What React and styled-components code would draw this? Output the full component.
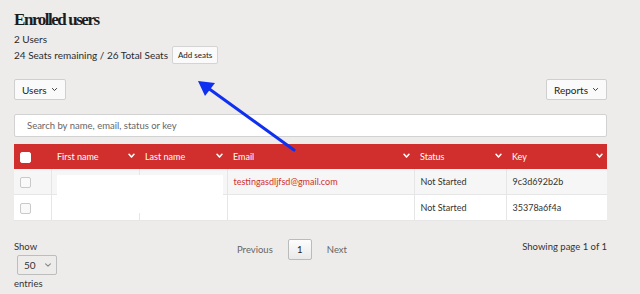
import React from 'react';
import styled, { createGlobalStyle } from 'styled-components';

const GlobalStyle = createGlobalStyle`
  html, body {
    margin: 0;
    padding: 0;
    background: #edeceb;
  }
  body {
    font-family: "Lato", "Noto Sans", sans-serif;
    color: #2b2b2b;
  }
`;

const Page = styled.div`
  position: relative;
  width: 640px;
  height: 294px;
  padding: 9px 33px 0 14px;
  box-sizing: border-box;
  overflow: hidden;
`;

const Title = styled.h1`
  margin: 0;
  font-family: "Liberation Serif", serif;
  font-weight: 700;
  font-size: 17px;
  line-height: 22px;
  letter-spacing: -1.45px;
  color: #1c1c1c;
`;

const Meta = styled.div`
  font-size: 10px;
  line-height: 13px;
  margin-top: ${p => p.$top || 0}px;
  display: flex;
  align-items: center;
  gap: 4px;
`;

const SmallButton = styled.button`
  font-family: inherit;
  font-size: 8px;
  color: #222;
  background: #fafafa;
  border: 1px solid #d4d4d4;
  border-radius: 2px;
  height: 18px;
  padding: 0 5px;
`;

const Toolbar = styled.div`
  display: flex;
  justify-content: space-between;
  margin-top: 15px;
`;

const DropButton = styled.button`
  font-family: inherit;
  font-size: 10px;
  color: #222;
  background: #fafafa;
  border: 1px solid #cfcfcf;
  border-radius: 2px;
  height: 21px;
  padding: 0 7px;
  display: flex;
  align-items: center;
  gap: 4px;
`;

const Search = styled.div`
  margin-top: 14px;
  height: 23px;
  background: #fff;
  border: 1px solid #d2d2d2;
  border-radius: 2px;
  box-sizing: border-box;
  padding-left: 12px;
  display: flex;
  align-items: center;
  font-size: 9.5px;
  color: #666;
`;

const TableWrap = styled.div`
  position: relative;
  margin-top: 7px;
`;

const Table = styled.table`
  width: 593px;
  table-layout: fixed;
  border-collapse: collapse;
  font-size: 9px;
`;

const Th = styled.th`
  background: #d12e2e;
  color: #fff;
  font-weight: 400;
  text-align: left;
  height: 25px;
  padding: 0 6px;
  position: relative;
`;

const Caret = styled.span`
  position: absolute;
  right: 4px;
  top: 9px;
  display: flex;
`;

const Tr = styled.tr`
  background: ${p => (p.$alt ? '#f6f6f6' : '#fff')};
  border-bottom: 1px solid #e6e6e6;
`;

const Td = styled.td`
  height: 25px;
  padding: 0 6px;
  border-left: 1px solid #e6e6e6;
  color: ${p => (p.$red ? '#d12e2e' : '#333')};
  &:first-child { border-left: none; }
`;

const Box = styled.span`
  display: inline-block;
  width: 9px;
  height: 9px;
  border-radius: 2px;
  border: 1px solid ${p => (p.$head ? '#fff' : '#c9c9c9')};
  background: ${p => (p.$head ? '#fff' : '#f9f9f9')};
  vertical-align: middle;
`;

const Redact = styled.div`
  position: absolute;
  left: 43px;
  top: 31px;
  width: 166px;
  height: 38px;
  background: #fff;
`;

const Footer = styled.div`
  display: grid;
  grid-template-columns: 223px auto 1fr;
  margin-top: 18px;
  font-size: 9.5px;
`;

const ShowBox = styled.div`
  padding-top: 2px;
  line-height: 12px;
  color: #333;
`;

const Select = styled.div`
  margin: 2px 0 3px 3px;
  width: 40px;
  height: 20px;
  box-sizing: border-box;
  border: 1px solid #bdbdbd;
  border-radius: 2px;
  display: flex;
  align-items: center;
  justify-content: space-between;
  padding: 0 4px 0 6px;
  font-size: 10px;
`;

const Pager = styled.div`
  display: flex;
  align-items: flex-start;
  gap: 15px;
  color: #666;
  font-size: 9.5px;
`;

const PageLabel = styled.span`
  line-height: 21px;
`;

const PageNum = styled.span`
  width: 24px;
  height: 21px;
  box-sizing: border-box;
  border: 1px solid #bbb;
  background: linear-gradient(#fdfdfd, #e9e9e9);
  border-radius: 2px;
  display: flex;
  align-items: center;
  justify-content: center;
  color: #222;
`;

const Info = styled.div`
  text-align: right;
  color: #333;
  padding-top: 2px;
`;

const Arrow = styled.svg`
  position: absolute;
  left: 0;
  top: 0;
  pointer-events: none;
`;

const Chevron = ({ color = '#333', size = 7 }) => (
  <svg width={size} height={size} viewBox="0 0 10 10">
    <path d="M2 3.5 L5 6.5 L8 3.5" fill="none" stroke={color} strokeWidth="1.4" strokeLinecap="round" strokeLinejoin="round" />
  </svg>
);

const HeadCaret = () => (
  <Caret>
    <svg width="7" height="6" viewBox="0 0 10 8">
      <path d="M1.5 1.5 L5 5.5 L8.5 1.5" fill="none" stroke="#fff" strokeWidth="2.2" strokeLinecap="round" strokeLinejoin="round" />
    </svg>
  </Caret>
);

const rows = [
  { email: 'testingasdljfsd@gmail.com', status: 'Not Started', key: '9c3d692b2b' },
  { email: '', status: 'Not Started', key: '35378a6f4a' },
];

export default function App() {
  return (
    <Page>
      <GlobalStyle />
      <Title>Enrolled users</Title>
      <Meta $top={2}>2 Users</Meta>
      <Meta $top={0}>
        24 Seats remaining / 26 Total Seats
        <SmallButton>Add seats</SmallButton>
      </Meta>
      <Toolbar>
        <DropButton>Users <Chevron /></DropButton>
        <DropButton>Reports <Chevron /></DropButton>
      </Toolbar>
      <Search>Search by name, email, status or key</Search>
      <TableWrap>
        <Table>
          <colgroup>
            <col style={{ width: 37 }} />
            <col style={{ width: 88 }} />
            <col style={{ width: 88 }} />
            <col style={{ width: 187 }} />
            <col style={{ width: 92 }} />
            <col style={{ width: 101 }} />
          </colgroup>
          <thead>
            <tr>
              <Th><Box $head /></Th>
              <Th>First name<HeadCaret /></Th>
              <Th>Last name<HeadCaret /></Th>
              <Th>Email<HeadCaret /></Th>
              <Th>Status<HeadCaret /></Th>
              <Th>Key<HeadCaret /></Th>
            </tr>
          </thead>
          <tbody>
            {rows.map((r, i) => (
              <Tr key={r.key} $alt={i === 0}>
                <Td><Box /></Td>
                <Td />
                <Td />
                <Td $red>{r.email}</Td>
                <Td>{r.status}</Td>
                <Td>{r.key}</Td>
              </Tr>
            ))}
          </tbody>
        </Table>
        <Redact />
      </TableWrap>
      <Footer>
        <ShowBox>
          Show
          <Select>50 <Chevron color="#888" size={8} /></Select>
          entries
        </ShowBox>
        <Pager>
          <PageLabel>Previous</PageLabel>
          <PageNum>1</PageNum>
          <PageLabel>Next</PageLabel>
        </Pager>
        <Info>Showing page 1 of 1</Info>
      </Footer>
      <Arrow width="640" height="294">
        <line x1="294" y1="150" x2="208" y2="88" stroke="#1030f0" strokeWidth="3" strokeLinecap="round" />
        <polygon points="198,81 215,83 205,96" fill="#1030f0" />
      </Arrow>
    </Page>
  );
}
